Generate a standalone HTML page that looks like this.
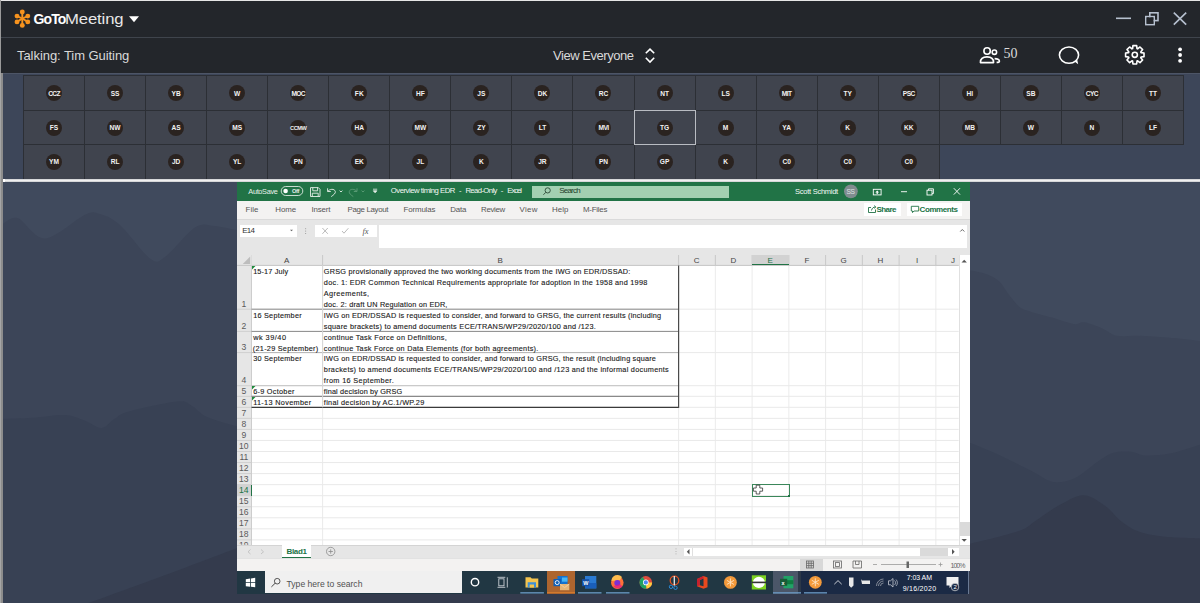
<!DOCTYPE html>
<html><head><meta charset="utf-8"><style>
*{margin:0;padding:0;box-sizing:border-box}
html,body{width:1200px;height:603px;overflow:hidden}
body{position:relative;background:#3d4658;font-family:"Liberation Sans",sans-serif}
.a{position:absolute}
#lb{left:0;top:73px;width:3px;height:530px;background:linear-gradient(90deg,#a6a6a6 0,#a6a6a6 50%,#8c8c8c 50%)}
#tb{left:1px;top:0;width:1199px;height:73px;background:#23262b;border-top:1px solid #e6e6e6}
#tbl{left:1px;top:37px;width:1199px;height:1px;background:#3f444c}
#gridbg{left:3px;top:73px;width:1197px;height:106px;background:#3d4659;border-top:1px solid #4d5566}
.pc{position:absolute;background:#40444e;border:1px solid #2c2f35;display:flex;align-items:center;justify-content:center}
.pc.sel{border:1px solid #b9bcc2;z-index:2}
.av{width:16px;height:16px;border-radius:50%;background:#2a2320;display:flex;align-items:center;justify-content:center}
.av span{color:#f2f2f2;font-size:6.6px;font-weight:bold;line-height:1;position:relative;top:0.8px}
#wl{left:5px;top:179px;width:1195px;height:3px;background:linear-gradient(#bfc0c4,#f0f0f0 35%,#f0f0f0 65%,#bfc0c4)}
#bg{left:3px;top:182px;width:1197px;height:421px}
.wt{color:#fff}
.tx{position:absolute;white-space:pre;line-height:1}
#xl{left:237px;top:181px;width:733px;height:390px;background:#ffffff;overflow:hidden}

</style></head><body>
<div class="a" id="tb"></div>
<div class="a" id="tbl"></div>
<div class="a" id="gridbg"></div>
<svg class="a" id="bg" width="1197" height="421" viewBox="3 182 1197 421">
<rect x="3" y="182" width="1197" height="421" fill="#404a5d"/>
<path d="M3.0 223.8 C5.5 222.9 11.0 215.9 18.0 218.3 C25.0 220.7 33.8 239.0 45.0 238.4 C56.2 237.8 75.8 218.8 85.0 214.7 C94.2 210.6 94.2 212.3 100.0 214.0 C105.8 215.7 111.7 217.6 120.0 225.0 C128.3 232.4 142.5 253.2 150.0 258.5 C157.5 263.8 157.5 262.2 165.0 257.0 C172.5 251.8 186.7 232.6 195.0 227.4 C203.3 222.2 206.7 225.2 215.0 226.0 C223.3 226.8 240.0 231.0 245.0 232.0 L960.0 270.0 C961.7 270.1 965.9 269.9 970.4 270.6 C974.9 271.3 981.9 272.4 986.7 274.2 C991.5 276.0 995.7 278.1 999.3 281.4 C1002.9 284.7 1005.1 289.8 1008.4 294.0 C1011.7 298.2 1015.6 303.8 1019.2 306.7 C1022.8 309.6 1024.6 309.6 1030.0 311.4 C1035.4 313.2 1044.5 315.5 1051.8 317.6 C1059.0 319.7 1068.1 323.2 1073.5 324.0 C1078.9 324.8 1079.5 321.6 1084.3 322.3 C1089.1 323.0 1097.0 326.2 1102.4 328.4 C1107.8 330.6 1110.8 334.5 1116.8 335.7 C1122.8 336.9 1130.0 335.4 1138.5 335.7 C1147.0 336.0 1157.2 336.6 1167.5 337.5 C1177.8 338.4 1194.6 340.4 1200.0 341.0 L1200 603 L3 603 Z" fill="#3c4558"/>
<path d="M3.0 418.8 C8.0 418.6 22.7 418.3 33.0 417.7 C43.3 417.1 56.0 414.5 64.7 415.0 C73.4 415.5 78.8 418.5 85.0 420.7 C91.2 422.9 96.8 428.3 101.7 428.0 C106.6 427.7 110.0 421.6 114.6 418.8 C119.1 416.0 118.5 414.3 129.0 411.4 C139.5 408.5 166.9 402.3 177.4 401.4 C187.9 400.5 187.1 403.3 192.0 405.9 C196.9 408.5 199.6 413.6 207.0 417.0 C214.4 420.4 230.3 424.4 236.6 426.2 C242.9 428.0 243.6 427.7 245.0 428.0 L960.0 440.0 C961.7 440.5 963.6 440.4 970.3 443.0 C977.0 445.6 989.7 450.7 1000.0 455.4 C1010.3 460.1 1023.2 466.9 1032.0 471.3 C1040.8 475.7 1045.9 480.7 1053.0 481.9 C1060.1 483.1 1066.8 481.8 1074.5 478.3 C1082.2 474.8 1092.6 464.9 1099.0 460.7 C1105.4 456.5 1107.7 454.4 1113.0 452.9 C1118.3 451.4 1125.7 451.4 1131.0 451.8 C1136.3 452.2 1138.5 455.1 1145.0 455.4 C1151.5 455.7 1160.8 455.4 1170.0 453.6 C1179.2 451.8 1195.0 446.3 1200.0 444.8 L1200 603 L3 603 Z" fill="#384154"/>
<path d="M88.7 603.0 C100.6 598.7 135.3 586.1 160.0 577.0 C184.7 567.9 222.4 553.5 236.6 548.2 C250.8 542.9 243.6 545.5 245.0 545.0 L960.0 545.0 C961.7 544.8 960.6 546.0 970.3 543.7 C980.0 541.4 1007.1 535.1 1018.0 531.3 C1028.9 527.5 1029.2 524.8 1035.7 520.7 C1042.2 516.6 1049.0 510.8 1057.0 506.6 C1065.0 502.4 1075.2 495.3 1083.4 495.3 C1091.6 495.3 1099.8 502.4 1106.0 506.6 C1112.2 510.8 1115.2 516.6 1120.5 520.7 C1125.8 524.8 1130.9 528.6 1138.0 531.3 C1145.1 533.9 1152.7 535.4 1163.0 536.6 C1173.3 537.8 1193.8 538.1 1200.0 538.4 L1200 603 Z" fill="#343b4d"/>
</svg>

<svg class="a" style="left:12px;top:8px" width="22" height="22" viewBox="0 0 22 22">
<g fill="#f7931e" stroke="#f7931e" stroke-width="1.9">
<line x1="10.3" y1="10.5" x2="10.3" y2="4"/><line x1="10.3" y1="10.5" x2="10.3" y2="17.4"/>
<line x1="10.3" y1="10.5" x2="5" y2="8.1"/><line x1="10.3" y1="10.5" x2="15.8" y2="8.1"/>
<line x1="10.3" y1="10.5" x2="5" y2="13.9"/><line x1="10.3" y1="10.5" x2="15.8" y2="13.9"/>
<circle cx="10.3" cy="4" r="2.45" stroke="none"/><circle cx="10.3" cy="17.4" r="2.45" stroke="none"/>
<circle cx="5" cy="8.1" r="2.45" stroke="none"/><circle cx="15.8" cy="8.1" r="2.45" stroke="none"/>
<circle cx="5" cy="13.9" r="2.45" stroke="none"/><circle cx="15.8" cy="13.9" r="2.45" stroke="none"/>
</g></svg>
<div class="a wt" style="left:33.5px;top:11.3px;font-size:14px;line-height:16px;white-space:nowrap"><b style="letter-spacing:-0.9px">GoTo</b><span style="display:inline-block;transform:scaleX(1.19);transform-origin:0 50%;color:#e8e8e8;letter-spacing:-0.1px">Meeting</span></div>
<svg class="a" style="left:128px;top:15px" width="12" height="8" viewBox="0 0 12 8"><path d="M1 1.2 H11 L6 7.2Z" fill="#fff"/></svg>
<svg class="a" style="left:1110px;top:8px" width="82" height="22" viewBox="1110 8 82 22">
<g stroke="#b6c0cf" stroke-width="1.6" fill="none">
<line x1="1116" y1="18.3" x2="1131" y2="18.3"/>
<rect x="1149.8" y="12.8" width="8.2" height="7.8"/>
<rect x="1145.8" y="16.6" width="8.4" height="8"/>
<line x1="1173.8" y1="12.6" x2="1186.2" y2="24.6"/><line x1="1186.2" y1="12.6" x2="1173.8" y2="24.6"/>
</g>
<rect x="1146.6" y="17.4" width="6.8" height="6.4" fill="#23262b"/>
<rect x="1146.6" y="17.4" width="6.8" height="6.4" fill="none" stroke="#b6c0cf" stroke-width="1.6" transform="translate(-0.8 -0.8)" opacity="0"/>
</svg>
<div class="a" style="left:17px;top:48.3px;font-size:13px;line-height:16px;color:#d9d9d9;white-space:nowrap;letter-spacing:-0.06px">Talking: Tim Guiting</div>
<div class="a" style="left:553px;top:48px;font-size:13px;line-height:16px;color:#d9d9d9;white-space:nowrap;letter-spacing:-0.45px">View Everyone</div>
<svg class="a" style="left:643px;top:46px" width="14" height="18" viewBox="0 0 14 18"><path d="M2.8 7.3 L7 3.1 L11.2 7.3 M2.8 11.8 L7 16 L11.2 11.8" stroke="#fff" stroke-width="1.6" fill="none"/></svg>

<svg class="a" style="left:970px;top:40px;width:230px;height:32px" viewBox="970 40 230 32">
<g stroke="#fff" stroke-width="1.6" fill="none" stroke-linejoin="round">
<circle cx="987.1" cy="51" r="3.2"/>
<circle cx="994.4" cy="52.2" r="2.2"/>
<path d="M980.4 62.6 C980.4 58.5 983.5 56.9 987 56.9 C990.5 56.9 993.6 58.5 993.6 62.6 Z"/>
<path d="M994.6 58.6 C997.5 58.8 999.4 60 999.4 61.2 C999.4 62 998.2 62.4 996.6 62.4"/>
<ellipse cx="1069" cy="55.1" rx="9.6" ry="8.1"/>
<path d="M1135 55 m0 0" />
<path d="M1141.02 52.60 L1144.01 52.93 L1144.01 56.67 L1141.02 57.00 L1140.76 57.64 L1142.63 59.99 L1139.99 62.63 L1137.64 60.76 L1137.00 61.02 L1136.67 64.01 L1132.93 64.01 L1132.60 61.02 L1131.96 60.76 L1129.61 62.63 L1126.97 59.99 L1128.84 57.64 L1128.58 57.00 L1125.59 56.67 L1125.59 52.93 L1128.58 52.60 L1128.84 51.96 L1126.97 49.61 L1129.61 46.97 L1131.96 48.84 L1132.60 48.58 L1132.93 45.59 L1136.67 45.59 L1137.00 48.58 L1137.64 48.84 L1139.99 46.97 L1142.63 49.61 L1140.76 51.96Z"/>
<circle cx="1134.8" cy="54.8" r="2.6"/>
</g>
<path d="M1074.5 61.5 L1078.2 64.2 L1077.2 59.8Z" fill="#fff"/>
<circle cx="1180.1" cy="49.3" r="1.9" fill="#fff"/><circle cx="1180.1" cy="55" r="1.9" fill="#fff"/><circle cx="1180.1" cy="60.8" r="1.9" fill="#fff"/>
</svg>
<div class="a" style="left:1003.5px;top:45.5px;font-family:'Liberation Serif',serif;font-size:14px;line-height:16px;color:#dcdcdc">50</div>
<div class="pc" style="left:23.00px;top:75px;width:62.05px;height:36px"><div class="av"><span style="letter-spacing:-0.6px">CCZ</span></div></div>
<div class="pc" style="left:84.05px;top:75px;width:62.05px;height:36px"><div class="av"><span>SS</span></div></div>
<div class="pc" style="left:145.11px;top:75px;width:62.05px;height:36px"><div class="av"><span>YB</span></div></div>
<div class="pc" style="left:206.16px;top:75px;width:62.05px;height:36px"><div class="av"><span>W</span></div></div>
<div class="pc" style="left:267.21px;top:75px;width:62.05px;height:36px"><div class="av"><span style="letter-spacing:-0.6px">MOC</span></div></div>
<div class="pc" style="left:328.26px;top:75px;width:62.05px;height:36px"><div class="av"><span>FK</span></div></div>
<div class="pc" style="left:389.32px;top:75px;width:62.05px;height:36px"><div class="av"><span>HF</span></div></div>
<div class="pc" style="left:450.37px;top:75px;width:62.05px;height:36px"><div class="av"><span>JS</span></div></div>
<div class="pc" style="left:511.42px;top:75px;width:62.05px;height:36px"><div class="av"><span>DK</span></div></div>
<div class="pc" style="left:572.47px;top:75px;width:62.05px;height:36px"><div class="av"><span>RC</span></div></div>
<div class="pc" style="left:633.53px;top:75px;width:62.05px;height:36px"><div class="av"><span>NT</span></div></div>
<div class="pc" style="left:694.58px;top:75px;width:62.05px;height:36px"><div class="av"><span>LS</span></div></div>
<div class="pc" style="left:755.63px;top:75px;width:62.05px;height:36px"><div class="av"><span style="letter-spacing:-0.6px">MIT</span></div></div>
<div class="pc" style="left:816.68px;top:75px;width:62.05px;height:36px"><div class="av"><span>TY</span></div></div>
<div class="pc" style="left:877.74px;top:75px;width:62.05px;height:36px"><div class="av"><span style="letter-spacing:-0.6px">PSC</span></div></div>
<div class="pc" style="left:938.79px;top:75px;width:62.05px;height:36px"><div class="av"><span>HI</span></div></div>
<div class="pc" style="left:999.84px;top:75px;width:62.05px;height:36px"><div class="av"><span>SB</span></div></div>
<div class="pc" style="left:1060.89px;top:75px;width:62.05px;height:36px"><div class="av"><span style="letter-spacing:-0.6px">CYC</span></div></div>
<div class="pc" style="left:1121.95px;top:75px;width:62.05px;height:36px"><div class="av"><span>TT</span></div></div>
<div class="pc" style="left:23.00px;top:110px;width:62.05px;height:35px"><div class="av"><span>FS</span></div></div>
<div class="pc" style="left:84.05px;top:110px;width:62.05px;height:35px"><div class="av"><span>NW</span></div></div>
<div class="pc" style="left:145.11px;top:110px;width:62.05px;height:35px"><div class="av"><span>AS</span></div></div>
<div class="pc" style="left:206.16px;top:110px;width:62.05px;height:35px"><div class="av"><span>MS</span></div></div>
<div class="pc" style="left:267.21px;top:110px;width:62.05px;height:35px"><div class="av"><span style="font-size:5.6px;letter-spacing:-0.45px">CCMW</span></div></div>
<div class="pc" style="left:328.26px;top:110px;width:62.05px;height:35px"><div class="av"><span>HA</span></div></div>
<div class="pc" style="left:389.32px;top:110px;width:62.05px;height:35px"><div class="av"><span>MW</span></div></div>
<div class="pc" style="left:450.37px;top:110px;width:62.05px;height:35px"><div class="av"><span>ZY</span></div></div>
<div class="pc" style="left:511.42px;top:110px;width:62.05px;height:35px"><div class="av"><span>LT</span></div></div>
<div class="pc" style="left:572.47px;top:110px;width:62.05px;height:35px"><div class="av"><span style="letter-spacing:-0.6px">MVI</span></div></div>
<div class="pc sel" style="left:633.53px;top:110px;width:62.05px;height:35px"><div class="av"><span>TG</span></div></div>
<div class="pc" style="left:694.58px;top:110px;width:62.05px;height:35px"><div class="av"><span>M</span></div></div>
<div class="pc" style="left:755.63px;top:110px;width:62.05px;height:35px"><div class="av"><span>YA</span></div></div>
<div class="pc" style="left:816.68px;top:110px;width:62.05px;height:35px"><div class="av"><span>K</span></div></div>
<div class="pc" style="left:877.74px;top:110px;width:62.05px;height:35px"><div class="av"><span>KK</span></div></div>
<div class="pc" style="left:938.79px;top:110px;width:62.05px;height:35px"><div class="av"><span>MB</span></div></div>
<div class="pc" style="left:999.84px;top:110px;width:62.05px;height:35px"><div class="av"><span>W</span></div></div>
<div class="pc" style="left:1060.89px;top:110px;width:62.05px;height:35px"><div class="av"><span>N</span></div></div>
<div class="pc" style="left:1121.95px;top:110px;width:62.05px;height:35px"><div class="av"><span>LF</span></div></div>
<div class="pc" style="left:23.00px;top:144px;width:62.05px;height:35.5px"><div class="av"><span>YM</span></div></div>
<div class="pc" style="left:84.05px;top:144px;width:62.05px;height:35.5px"><div class="av"><span>RL</span></div></div>
<div class="pc" style="left:145.11px;top:144px;width:62.05px;height:35.5px"><div class="av"><span>JD</span></div></div>
<div class="pc" style="left:206.16px;top:144px;width:62.05px;height:35.5px"><div class="av"><span>YL</span></div></div>
<div class="pc" style="left:267.21px;top:144px;width:62.05px;height:35.5px"><div class="av"><span>PN</span></div></div>
<div class="pc" style="left:328.26px;top:144px;width:62.05px;height:35.5px"><div class="av"><span>EK</span></div></div>
<div class="pc" style="left:389.32px;top:144px;width:62.05px;height:35.5px"><div class="av"><span>JL</span></div></div>
<div class="pc" style="left:450.37px;top:144px;width:62.05px;height:35.5px"><div class="av"><span>K</span></div></div>
<div class="pc" style="left:511.42px;top:144px;width:62.05px;height:35.5px"><div class="av"><span>JR</span></div></div>
<div class="pc" style="left:572.47px;top:144px;width:62.05px;height:35.5px"><div class="av"><span>PN</span></div></div>
<div class="pc" style="left:633.53px;top:144px;width:62.05px;height:35.5px"><div class="av"><span>GP</span></div></div>
<div class="pc" style="left:694.58px;top:144px;width:62.05px;height:35.5px"><div class="av"><span>K</span></div></div>
<div class="pc" style="left:755.63px;top:144px;width:62.05px;height:35.5px"><div class="av"><span>C0</span></div></div>
<div class="pc" style="left:816.68px;top:144px;width:62.05px;height:35.5px"><div class="av"><span>C0</span></div></div>
<div class="pc" style="left:877.74px;top:144px;width:62.05px;height:35.5px"><div class="av"><span>C0</span></div></div>
<div id="xl">
<div class="a" style="left:237px;top:181px;width:733px;height:390px;background:#fff"></div>
<div class="a" style="left:237px;top:181px;width:733px;height:20px;background:#217346"></div>
<div class="a" style="left:237px;top:201px;width:733px;height:18px;background:#f3f2f1"></div>
<div class="a" style="left:237px;top:218.5px;width:733px;height:1px;background:#dadada"></div>
<div class="a" style="left:237px;top:219.5px;width:733px;height:46px;background:#e6e6e6"></div>
<!-- search box -->
<div class="a" style="left:532.2px;top:185.5px;width:197px;height:12.5px;background:#a3d0b1"></div>
<!-- share/comments -->
<div class="a" style="left:863.5px;top:203.4px;width:37.5px;height:12.6px;background:#fff"></div>
<div class="a" style="left:906.6px;top:203.4px;width:55.7px;height:12.6px;background:#fff"></div>
<!-- name box / fx / formula -->
<div class="a" style="left:239.9px;top:224.8px;width:57.3px;height:12.5px;background:#fff"></div>
<div class="a" style="left:315.1px;top:225px;width:61.6px;height:12.2px;background:#fff"></div>
<div class="a" style="left:379.4px;top:225px;width:587.6px;height:23px;background:#fff"></div>
<!-- grid -->
<div class="a" style="left:251.5px;top:265.5px;width:707.2px;height:279.5px;background:#fff"></div>
<div class="a" style="left:237px;top:265.5px;width:14.5px;height:279.5px;background:#e6e6e6"></div>
<svg class="a" style="left:0;top:0" width="1200" height="603" viewBox="0 0 1200 603">
<line x1="322.60" y1="265.40" x2="322.60" y2="545.00" stroke="#ebebeb" stroke-width="1"/>
<line x1="678.60" y1="265.40" x2="678.60" y2="545.00" stroke="#ebebeb" stroke-width="1"/>
<line x1="715.35" y1="265.40" x2="715.35" y2="545.00" stroke="#ebebeb" stroke-width="1"/>
<line x1="752.10" y1="265.40" x2="752.10" y2="545.00" stroke="#ebebeb" stroke-width="1"/>
<line x1="788.85" y1="265.40" x2="788.85" y2="545.00" stroke="#ebebeb" stroke-width="1"/>
<line x1="825.60" y1="265.40" x2="825.60" y2="545.00" stroke="#ebebeb" stroke-width="1"/>
<line x1="862.35" y1="265.40" x2="862.35" y2="545.00" stroke="#ebebeb" stroke-width="1"/>
<line x1="899.10" y1="265.40" x2="899.10" y2="545.00" stroke="#ebebeb" stroke-width="1"/>
<line x1="935.85" y1="265.40" x2="935.85" y2="545.00" stroke="#ebebeb" stroke-width="1"/>
<line x1="251.50" y1="309.20" x2="958.70" y2="309.20" stroke="#e9e9e9" stroke-width="1"/>
<line x1="251.50" y1="331.40" x2="958.70" y2="331.40" stroke="#e9e9e9" stroke-width="1"/>
<line x1="251.50" y1="352.60" x2="958.70" y2="352.60" stroke="#e9e9e9" stroke-width="1"/>
<line x1="251.50" y1="385.70" x2="958.70" y2="385.70" stroke="#e9e9e9" stroke-width="1"/>
<line x1="251.50" y1="396.30" x2="958.70" y2="396.30" stroke="#e9e9e9" stroke-width="1"/>
<line x1="251.50" y1="407.30" x2="958.70" y2="407.30" stroke="#e9e9e9" stroke-width="1"/>
<line x1="251.50" y1="418.35" x2="958.70" y2="418.35" stroke="#e9e9e9" stroke-width="1"/>
<line x1="251.50" y1="429.40" x2="958.70" y2="429.40" stroke="#e9e9e9" stroke-width="1"/>
<line x1="251.50" y1="440.45" x2="958.70" y2="440.45" stroke="#e9e9e9" stroke-width="1"/>
<line x1="251.50" y1="451.50" x2="958.70" y2="451.50" stroke="#e9e9e9" stroke-width="1"/>
<line x1="251.50" y1="462.55" x2="958.70" y2="462.55" stroke="#e9e9e9" stroke-width="1"/>
<line x1="251.50" y1="473.60" x2="958.70" y2="473.60" stroke="#e9e9e9" stroke-width="1"/>
<line x1="251.50" y1="484.65" x2="958.70" y2="484.65" stroke="#e9e9e9" stroke-width="1"/>
<line x1="251.50" y1="495.70" x2="958.70" y2="495.70" stroke="#e9e9e9" stroke-width="1"/>
<line x1="251.50" y1="506.75" x2="958.70" y2="506.75" stroke="#e9e9e9" stroke-width="1"/>
<line x1="251.50" y1="517.80" x2="958.70" y2="517.80" stroke="#e9e9e9" stroke-width="1"/>
<line x1="251.50" y1="528.85" x2="958.70" y2="528.85" stroke="#e9e9e9" stroke-width="1"/>
<line x1="251.50" y1="539.90" x2="958.70" y2="539.90" stroke="#e9e9e9" stroke-width="1"/>
<line x1="322.60" y1="255.00" x2="322.60" y2="265.40" stroke="#c8c8c8" stroke-width="1"/>
<line x1="678.60" y1="255.00" x2="678.60" y2="265.40" stroke="#c8c8c8" stroke-width="1"/>
<line x1="715.35" y1="255.00" x2="715.35" y2="265.40" stroke="#c8c8c8" stroke-width="1"/>
<line x1="752.10" y1="255.00" x2="752.10" y2="265.40" stroke="#c8c8c8" stroke-width="1"/>
<line x1="788.85" y1="255.00" x2="788.85" y2="265.40" stroke="#c8c8c8" stroke-width="1"/>
<line x1="825.60" y1="255.00" x2="825.60" y2="265.40" stroke="#c8c8c8" stroke-width="1"/>
<line x1="862.35" y1="255.00" x2="862.35" y2="265.40" stroke="#c8c8c8" stroke-width="1"/>
<line x1="899.10" y1="255.00" x2="899.10" y2="265.40" stroke="#c8c8c8" stroke-width="1"/>
<line x1="935.85" y1="255.00" x2="935.85" y2="265.40" stroke="#c8c8c8" stroke-width="1"/>
<line x1="237.00" y1="309.20" x2="251.50" y2="309.20" stroke="#cfcfcf" stroke-width="1"/>
<line x1="237.00" y1="331.40" x2="251.50" y2="331.40" stroke="#cfcfcf" stroke-width="1"/>
<line x1="237.00" y1="352.60" x2="251.50" y2="352.60" stroke="#cfcfcf" stroke-width="1"/>
<line x1="237.00" y1="385.70" x2="251.50" y2="385.70" stroke="#cfcfcf" stroke-width="1"/>
<line x1="237.00" y1="396.30" x2="251.50" y2="396.30" stroke="#cfcfcf" stroke-width="1"/>
<line x1="237.00" y1="407.30" x2="251.50" y2="407.30" stroke="#cfcfcf" stroke-width="1"/>
<line x1="237.00" y1="418.35" x2="251.50" y2="418.35" stroke="#cfcfcf" stroke-width="1"/>
<line x1="237.00" y1="429.40" x2="251.50" y2="429.40" stroke="#cfcfcf" stroke-width="1"/>
<line x1="237.00" y1="440.45" x2="251.50" y2="440.45" stroke="#cfcfcf" stroke-width="1"/>
<line x1="237.00" y1="451.50" x2="251.50" y2="451.50" stroke="#cfcfcf" stroke-width="1"/>
<line x1="237.00" y1="462.55" x2="251.50" y2="462.55" stroke="#cfcfcf" stroke-width="1"/>
<line x1="237.00" y1="473.60" x2="251.50" y2="473.60" stroke="#cfcfcf" stroke-width="1"/>
<line x1="237.00" y1="484.65" x2="251.50" y2="484.65" stroke="#cfcfcf" stroke-width="1"/>
<line x1="237.00" y1="495.70" x2="251.50" y2="495.70" stroke="#cfcfcf" stroke-width="1"/>
<line x1="237.00" y1="506.75" x2="251.50" y2="506.75" stroke="#cfcfcf" stroke-width="1"/>
<line x1="237.00" y1="517.80" x2="251.50" y2="517.80" stroke="#cfcfcf" stroke-width="1"/>
<line x1="237.00" y1="528.85" x2="251.50" y2="528.85" stroke="#cfcfcf" stroke-width="1"/>
<line x1="237.00" y1="539.90" x2="251.50" y2="539.90" stroke="#cfcfcf" stroke-width="1"/>
<line x1="237.00" y1="265.40" x2="958.70" y2="265.40" stroke="#c6c6c6" stroke-width="1"/>
<line x1="251.50" y1="265.40" x2="251.50" y2="545.00" stroke="#cdcdcd" stroke-width="1"/>
<line x1="251.50" y1="255.00" x2="251.50" y2="265.40" stroke="#dcdcdc" stroke-width="1"/>
<line x1="251.50" y1="309.20" x2="678.60" y2="309.20" stroke="#8a8a8a" stroke-width="1"/>
<line x1="251.50" y1="331.40" x2="678.60" y2="331.40" stroke="#8a8a8a" stroke-width="1"/>
<line x1="251.50" y1="352.60" x2="678.60" y2="352.60" stroke="#b4b4b4" stroke-width="1"/>
<line x1="251.50" y1="385.70" x2="678.60" y2="385.70" stroke="#c2c2c2" stroke-width="1"/>
<line x1="251.50" y1="396.30" x2="678.60" y2="396.30" stroke="#707070" stroke-width="1"/>
<line x1="251.50" y1="407.30" x2="678.60" y2="407.30" stroke="#3a3a3a" stroke-width="1.3"/>
<line x1="678.60" y1="265.40" x2="678.60" y2="407.90" stroke="#4a4a4a" stroke-width="1.2"/>
<line x1="322.60" y1="265.40" x2="322.60" y2="407.30" stroke="#d6d6d6" stroke-width="1"/>
</svg>

<!-- header highlights -->
<div class="a" style="left:752.1px;top:255px;width:36.75px;height:10.4px;background:#d2d2d2;border-bottom:1px solid #217346"></div>
<div class="a" style="left:237px;top:484.6px;width:14.5px;height:11.05px;background:#d2d2d2;border-right:1px solid #217346"></div>
<!-- corner triangle -->
<svg class="a" style="left:242px;top:256px" width="10" height="10" viewBox="0 0 10 10"><path d="M0.8 8 L8.2 8 L8.2 0.6Z" fill="#bdbdbd"/></svg>
<!-- green error triangles -->
<svg class="a" style="left:252px;top:265.5px" width="5" height="5" viewBox="0 0 5 5"><path d="M0 0 H3.5 L0 3.5Z" fill="#1e8a3c"/></svg>
<svg class="a" style="left:252px;top:386px" width="5" height="5" viewBox="0 0 5 5"><path d="M0 0 H3.5 L0 3.5Z" fill="#1e8a3c"/></svg>
<svg class="a" style="left:252px;top:396.8px" width="5" height="5" viewBox="0 0 5 5"><path d="M0 0 H3.5 L0 3.5Z" fill="#1e8a3c"/></svg>
<!-- selection E14 -->
<div class="a" style="left:752px;top:484.3px;width:37.6px;height:12.3px;border:1px solid #3b875a"></div>
<div class="a" style="left:787.8px;top:494.8px;width:2.6px;height:2.6px;background:#217346"></div>
<svg class="a" style="left:751px;top:482px" width="14" height="14" viewBox="0 0 14 14"><path d="M5.2 3.2 H8.8 V6 H11.6 V9.2 H8.8 V12 H5.2 V9.2 H2.4 V6 H5.2Z" fill="#fff" stroke="#333" stroke-width="0.8"/></svg>
<!-- vertical scrollbar -->
<div class="a" style="left:958.7px;top:255px;width:11.3px;height:290px;background:#fff;border-left:1px solid #e0e0e0"></div>
<div class="a" style="left:959.5px;top:522.4px;width:10px;height:14px;background:#dadada"></div>
<svg class="a" style="left:958px;top:255px" width="12" height="290" viewBox="0 0 12 290"><path d="M3.5 7.5 L6.2 4.8 L8.9 7.5Z" fill="#555"/><path d="M3.5 284 L6.2 286.7 L8.9 284Z" fill="#555"/></svg>
<!-- sheet tabs bar -->
<div class="a" style="left:237px;top:545.2px;width:733px;height:12.8px;background:#e6e6e6;border-top:1px solid #d4d4d4"></div>
<div class="a" style="left:282px;top:545.2px;width:29.4px;height:12.8px;background:#fff;border-bottom:1.3px solid #217346"></div>
<svg class="a" style="left:237px;top:545px" width="120" height="13" viewBox="0 0 120 13"><path d="M13.5 4.5 L11 6.8 L13.5 9" stroke="#c0c0c0" stroke-width="0.9" fill="none"/><path d="M24 4.5 L26.5 6.8 L24 9" stroke="#c0c0c0" stroke-width="0.9" fill="none"/><circle cx="93.7" cy="6.5" r="4.2" fill="none" stroke="#8a8a8a" stroke-width="0.8"/><path d="M93.7 4.3 V8.7 M91.5 6.5 H95.9" stroke="#8a8a8a" stroke-width="0.8"/></svg>
<!-- horizontal scrollbar -->
<div class="a" style="left:683.7px;top:547.5px;width:275px;height:8.5px;background:#fff"></div>
<div class="a" style="left:920px;top:547.5px;width:28px;height:8.5px;background:#dadada"></div>
<div class="a" style="left:691.8px;top:547.5px;width:0.8px;height:8.5px;background:#e0e0e0"></div>
<svg class="a" style="left:670px;top:545px" width="300" height="13" viewBox="0 0 300 13"><path d="M19.5 4 L16.8 6.7 L19.5 9.4Z" fill="#555"/><path d="M282 4 L284.7 6.7 L282 9.4Z" fill="#555"/><path d="M6 3.5 V4.3 M6 6 V6.8 M6 8.5 V9.3" stroke="#999" stroke-width="0.8"/></svg>
<!-- status bar -->
<div class="a" style="left:237px;top:558px;width:733px;height:13px;background:#f3f2f1;border-top:1px solid #e2e2e2"></div>
<div class="a" style="left:800px;top:558.5px;width:22.5px;height:12.5px;background:#d8d8d8"></div>
<svg class="a" style="left:790px;top:557px" width="180" height="15" viewBox="0 0 180 15">
<g stroke="#666" stroke-width="0.8" fill="none">
<rect x="16.5" y="4" width="7" height="7"/><path d="M16.5 6.3 H23.5 M16.5 8.6 H23.5 M18.8 4 V11 M21.2 4 V11"/>
<rect x="43.5" y="4" width="8" height="7"/><rect x="45.5" y="5.6" width="4" height="3.8"/>
<path d="M63 11 V4 H71.5 V11 Z M65.5 4 V7.5 H69 V4"/>
<path d="M83 7.5 H87 M91 7.5 H146 M148.5 7.5 H152.5 M150.5 5.5 V9.5" stroke="#999"/>
</g>
<rect x="116.5" y="4.5" width="2.5" height="6.5" fill="#666"/>
</svg>
</div>
</div>

<!-- taskbar -->
<div class="a" style="left:237px;top:571px;width:564px;height:22.5px;background:#213743"></div>
<div class="a" style="left:801px;top:571px;width:167px;height:22.5px;background:#1b2a45"></div>
<div class="a" style="left:967.5px;top:571px;width:1.2px;height:22.5px;background:#6a7a94"></div>
<div class="a" style="left:264.5px;top:571px;width:197px;height:22.4px;background:#f0f0f0"></div>
<div class="a" style="left:547px;top:571px;width:28px;height:22.5px;background:#ad652f"></div>
<div class="a" style="left:547px;top:592.2px;width:28px;height:1.3px;background:#d27a2e"></div>
<div class="a" style="left:773px;top:571px;width:25px;height:22.5px;background:#4b5668"></div>
<div class="a" style="left:798px;top:571px;width:3px;height:22.5px;background:#2b3748"></div>
<svg class="a" style="left:237px;top:571px" width="733" height="23" viewBox="237 571 733 23">
<!-- underlines -->
<g fill="#6d9bc6">
<rect x="520.3" y="592.2" width="23.6" height="1.3"/>
<rect x="578" y="592.2" width="23.5" height="1.3"/>
<rect x="606" y="592.2" width="23.5" height="1.3"/>
<rect x="773" y="592.2" width="28" height="1.3"/>
<rect x="804" y="592.2" width="23" height="1.3"/>
</g>
<!-- windows logo -->
<path d="M245.8 579.2 L250.2 578.6 L250.2 582.3 L245.8 582.3Z M251 578.5 L255.2 577.8 L255.2 582.3 L251 582.3Z M245.8 583.1 L250.2 583.1 L250.2 586.7 L245.8 586.2Z M251 583.1 L255.2 583.1 L255.2 587.3 L251 586.8Z" fill="#fff"/>
<!-- search icon -->
<circle cx="277.2" cy="581.2" r="2.8" fill="none" stroke="#444" stroke-width="0.9"/>
<path d="M275.2 583.2 L271.4 586.9" stroke="#444" stroke-width="1"/>
<!-- cortana -->
<circle cx="475" cy="582.2" r="3.7" fill="none" stroke="#fff" stroke-width="1.4"/>
<!-- task view -->
<g stroke="#c9cfd4" stroke-width="0.9" fill="none"><rect x="498.8" y="578.8" width="5.2" height="7"/><path d="M497.5 577.3 H505.3 M497.5 587.3 H505.3 M507.3 577.3 V587.5"/></g>
<!-- explorer -->
<path d="M525.5 577.2 H530.5 L531.8 578.5 H538.3 V587.6 H525.5Z" fill="#f4c44e"/>
<path d="M527.7 582.3 H536 V587.6 H534 V584.6 H529.8 V587.6 H527.7Z" fill="#3d8fd6"/>
<rect x="529.8" y="585" width="4.2" height="2.6" fill="#f4c44e"/>
<!-- outlook -->
<rect x="557.5" y="576" width="10" height="9" fill="#1573d0"/>
<rect x="562" y="577.5" width="5.5" height="4.2" fill="#48b6f5"/>
<rect x="553.5" y="579" width="7.5" height="7.2" fill="#0f5fb8"/>
<circle cx="557.2" cy="582.6" r="2" fill="none" stroke="#fff" stroke-width="0.9"/>
<rect x="560" y="584" width="9.3" height="6.2" fill="#e9b676"/>
<path d="M560 584 L564.6 587.6 L569.3 584" stroke="#f6d8ad" stroke-width="0.7" fill="none"/>
<!-- word -->
<rect x="585" y="576" width="11.3" height="12.4" fill="#2a7ad2"/>
<rect x="585" y="583" width="11.3" height="5.4" fill="#1a5fba"/>
<rect x="582" y="579.2" width="7.2" height="7" fill="#1450a8"/>
<text x="583.2" y="585" font-family="Liberation Sans" font-size="5.5" font-weight="bold" fill="#fff">W</text>
<!-- firefox -->
<circle cx="617.3" cy="582.6" r="6.3" fill="#ff7139"/>
<path d="M611.5 581 A6 6 0 0 1 622 577 L620 580Z" fill="#ffbd4f"/>
<circle cx="617.3" cy="583" r="3" fill="#7b2fd6"/>
<path d="M613 586 A6 6 0 0 0 622.5 586.5 L620 584Z" fill="#e31587" opacity="0.7"/>
<!-- chrome -->
<circle cx="645.8" cy="582.4" r="6.3" fill="#dd4b3e"/>
<path d="M645.8 582.4 L640.3 585.5 A6.3 6.3 0 0 0 646.5 588.7Z" fill="#1ea362"/>
<path d="M639.5 582.4 A6.3 6.3 0 0 0 640.3 585.5 L645.8 582.4 L642.9 577.1 A6.3 6.3 0 0 0 639.5 582.4Z" fill="#1ea362"/>
<path d="M645.8 582.4 L652.1 582.4 A6.3 6.3 0 0 1 646.5 588.7Z" fill="#ffcd40"/>
<circle cx="645.8" cy="582.4" r="2.8" fill="#fff"/>
<circle cx="645.8" cy="582.4" r="2.1" fill="#4a8af4"/>
<!-- snipping -->
<circle cx="674.5" cy="580.5" r="4.3" fill="none" stroke="#e0501f" stroke-width="1.3"/>
<path d="M674.3 576 V585.5" stroke="#e8e8e8" stroke-width="1.3"/>
<circle cx="671" cy="586.8" r="1.7" fill="none" stroke="#2a8ad6" stroke-width="1"/>
<circle cx="675.5" cy="587.8" r="1.7" fill="none" stroke="#2a8ad6" stroke-width="1"/>
<!-- office -->
<path d="M697 579 L703.5 576 L707.5 577.5 V587.3 L703.5 588.8 L697 586.3Z" fill="#e8491e"/>
<path d="M699.7 580 L703.5 578.6 V586.2 L699.7 585.2Z" fill="#213743"/>
<path d="M697 579 L703.5 576 V578.6 L699.7 580 V585.2 L697 586.3Z" fill="#c8202f"/>
<!-- goto -->
<circle cx="730.4" cy="582.4" r="6.4" fill="#f39a3b"/>
<g stroke="#fde3c3" stroke-width="0.9"><path d="M730.4 578.4 V586.4 M726.9 580.4 L733.9 584.4 M733.9 580.4 L726.9 584.4"/></g>
<!-- green app -->
<rect x="751.8" y="575.3" width="14.2" height="14.2" fill="#7dd321"/>
<ellipse cx="758.9" cy="582.4" rx="6" ry="5.6" fill="#fff"/>
<rect x="751.8" y="581.6" width="14.2" height="1.6" fill="#333"/>
<!-- excel -->
<rect x="783.5" y="576" width="9.8" height="12.3" fill="#21a366"/>
<rect x="783.5" y="580.2" width="9.8" height="4" fill="#107c41"/>
<rect x="780" y="578.8" width="7.2" height="7" fill="#185c37"/>
<text x="781.6" y="584.6" font-family="Liberation Sans" font-size="5.5" font-weight="bold" fill="#fff">x</text>
<!-- goto 2 -->
<circle cx="815.3" cy="582.3" r="6.4" fill="#f39a3b"/>
<g stroke="#fde3c3" stroke-width="0.9"><path d="M815.3 578.3 V586.3 M811.8 580.3 L818.8 584.3 M818.8 580.3 L811.8 584.3"/></g>
<!-- tray -->
<path d="M834.3 584.2 L838 580.6 L841.7 584.2" stroke="#c8ccd4" stroke-width="1" fill="none"/>
<path d="M849 577.5 H853.5 V585.5 L851.2 587.7 L849 585.5Z" fill="#e8e8e8"/>
<path d="M861 579 L862 580.5 H870 V584 H862Z" fill="#e8e8e8"/>
<path d="M876.5 586 A7 7 0 0 1 883.5 579 M878.5 586 A5 5 0 0 1 883.5 581 M880.5 586 A3 3 0 0 1 883.5 583" stroke="#9aa0aa" stroke-width="0.8" fill="none"/>
<path d="M888.5 580.8 H890.5 L893 578.5 V587 L890.5 584.8 H888.5Z" fill="none" stroke="#c8ccd4" stroke-width="0.8"/>
<path d="M894.5 580.5 A3 3 0 0 1 894.5 585 M896 579.5 A4.5 4.5 0 0 1 896 586" stroke="#c8ccd4" stroke-width="0.7" fill="none"/>
<!-- notification -->
<path d="M946.5 577 H958.5 V585.5 H952 L949.5 588 V585.5 H946.5Z" fill="#f0f0f0"/>
<circle cx="955" cy="587" r="3.8" fill="#1b2a45" stroke="#e0e0e0" stroke-width="0.7"/>
<text x="953.4" y="589.2" font-family="Liberation Sans" font-size="6" fill="#fff">2</text>
</svg>

<!-- excel title icons -->
<svg class="a" style="left:237px;top:181px" width="733" height="39" viewBox="237 181 733 39">
<rect x="281.2" y="186.5" width="21.6" height="9" rx="4.5" fill="none" stroke="#e6efe9" stroke-width="0.85"/>
<circle cx="285.6" cy="191" r="2.3" fill="#fff"/>
<text x="292" y="193.1" font-family="Liberation Sans" font-size="5.6" font-weight="bold" fill="#e6efe9" letter-spacing="-0.4">Off</text>
<g stroke="#e6efe9" stroke-width="0.9" fill="none">
<path d="M310.5 187.6 H318.3 L320 189.3 V196.5 H310.5Z"/>
<path d="M312.8 187.6 V190.8 H317.6 V187.6 M312.3 196.5 V193.2 H318.2 V196.5"/>
<path d="M327.6 188.3 V191.5 H330.8" />
<path d="M327.8 191.3 C329.5 189 334.5 188.3 335.3 191.5 C335.8 193.3 333.5 195 331.2 196.6"/>
<path d="M339.6 190.6 L341 192 L342.4 190.6"/>
</g>
<g stroke="#5e9d78" stroke-width="0.9" fill="none">
<path d="M357 188.3 V191.5 H353.8"/>
<path d="M356.8 191.3 C355 189 350 188.3 349.3 191.5 C348.8 193.3 351 195 353.3 196.6"/>
<path d="M361.6 190.6 L363 192 L364.4 190.6"/>
</g>
<path d="M373 189.2 H377.2 M373.3 190.8 L375.1 192.8 L376.9 190.8Z" stroke="#e6efe9" stroke-width="0.8" fill="#e6efe9"/>
<circle cx="547.7" cy="190.4" r="2.6" fill="none" stroke="#2b4a35" stroke-width="0.9"/>
<path d="M545.8 192.3 L543.4 194.8" stroke="#2b4a35" stroke-width="0.9"/>
<circle cx="850.9" cy="191.3" r="6.9" fill="#808c8f"/>
<text x="846.4" y="193.8" font-family="Liberation Sans" font-size="6.6" fill="#dfe4e4" letter-spacing="-0.2">SS</text>
<g stroke="#fff" stroke-width="0.9" fill="none">
<rect x="873.3" y="189.3" width="7.8" height="5.6"/>
<path d="M901 191.7 H907"/>
<rect x="927" y="190.2" width="5" height="4.8"/>
<path d="M928.5 190.2 V188.8 H933.4 V193.6 H932"/>
<path d="M953.8 188.2 L960 194.6 M960 188.2 L953.8 194.6"/>
</g>
<path d="M877.2 190.6 L875.3 192.5 H876.6 V194 H877.8 V192.5 H879.1Z" fill="#fff"/>
<g stroke="#217346" stroke-width="0.9" fill="none">
<path d="M868.5 207.5 H871 M868.5 207.5 V212.5 H875.5 V209.5 M871.5 210.5 C872 208 873.5 207 875.5 207 M874.2 205.6 L875.8 207 L874.2 208.4"/>
<path d="M911.3 206.3 H918.7 V211 H914 L912.5 212.6 V211 H911.3Z"/>
</g>
</svg>
<!-- formula bar icons -->
<svg class="a" style="left:237px;top:220px" width="733" height="35" viewBox="237 220 733 35">
<path d="M290 229.8 L291.5 231.3 L293 229.8Z" fill="#666"/>
<g fill="#9a9a9a"><rect x="305.2" y="228.2" width="0.9" height="1"/><rect x="305.2" y="230.6" width="0.9" height="1"/><rect x="305.2" y="233" width="0.9" height="1"/></g>
<path d="M322.4 228 L327.8 233.8 M327.8 228 L322.4 233.8" stroke="#a8a8a8" stroke-width="0.8"/>
<path d="M342 231 L344 233.2 L348.4 228.2" stroke="#a8a8a8" stroke-width="0.8" fill="none"/>
<text x="362.5" y="234" font-family="Liberation Serif" font-style="italic" font-size="8.5" fill="#555">fx</text>
<path d="M960.3 231.5 L962.3 229.5 L964.3 231.5" stroke="#555" stroke-width="0.9" fill="none"/>
</svg>
<div class="tx" style="left:248.33px;top:187.62px;font-size:7.3px;font-family:'Liberation Sans';color:#e8f0ea;font-weight:400;letter-spacing:-0.304px;">AutoSave</div>
<div class="tx" style="left:390.81px;top:187.38px;font-size:7.7px;font-family:'Liberation Sans';color:#f4f8f5;font-weight:400;letter-spacing:-0.471px;">Overview timing EDR</div>
<div class="tx" style="left:458.92px;top:187.38px;font-size:7.7px;font-family:'Liberation Sans';color:#f4f8f5;font-weight:400;letter-spacing:0.000px;">-</div>
<div class="tx" style="left:465.42px;top:187.38px;font-size:7.7px;font-family:'Liberation Sans';color:#f4f8f5;font-weight:400;letter-spacing:-0.597px;">Read-Only</div>
<div class="tx" style="left:500.81px;top:187.38px;font-size:7.7px;font-family:'Liberation Sans';color:#f4f8f5;font-weight:400;letter-spacing:0.000px;">-</div>
<div class="tx" style="left:507.31px;top:187.38px;font-size:7.7px;font-family:'Liberation Sans';color:#f4f8f5;font-weight:400;letter-spacing:-1.011px;">Excel</div>
<div class="tx" style="left:559.20px;top:187.23px;font-size:8px;font-family:'Liberation Sans';color:#1f3d2a;font-weight:400;letter-spacing:-0.772px;">Search</div>
<div class="tx" style="left:795.12px;top:187.85px;font-size:7.5px;font-family:'Liberation Sans';color:#f4f8f5;font-weight:400;letter-spacing:-0.269px;">Scott Schmidt</div>
<div class="tx" style="left:245.60px;top:206.41px;font-size:7.9px;font-family:'Liberation Sans';color:#555555;font-weight:400;letter-spacing:0.024px;">File</div>
<div class="tx" style="left:275.31px;top:206.41px;font-size:7.9px;font-family:'Liberation Sans';color:#555555;font-weight:400;letter-spacing:-0.091px;">Home</div>
<div class="tx" style="left:311.61px;top:206.41px;font-size:7.9px;font-family:'Liberation Sans';color:#555555;font-weight:400;letter-spacing:-0.189px;">Insert</div>
<div class="tx" style="left:347.61px;top:206.41px;font-size:7.9px;font-family:'Liberation Sans';color:#555555;font-weight:400;letter-spacing:-0.352px;">Page Layout</div>
<div class="tx" style="left:403.61px;top:206.41px;font-size:7.9px;font-family:'Liberation Sans';color:#555555;font-weight:400;letter-spacing:-0.157px;">Formulas</div>
<div class="tx" style="left:450.31px;top:206.41px;font-size:7.9px;font-family:'Liberation Sans';color:#555555;font-weight:400;letter-spacing:-0.194px;">Data</div>
<div class="tx" style="left:481.11px;top:206.41px;font-size:7.9px;font-family:'Liberation Sans';color:#555555;font-weight:400;letter-spacing:-0.377px;">Review</div>
<div class="tx" style="left:519.61px;top:206.41px;font-size:7.9px;font-family:'Liberation Sans';color:#555555;font-weight:400;letter-spacing:0.274px;">View</div>
<div class="tx" style="left:552.11px;top:206.41px;font-size:7.9px;font-family:'Liberation Sans';color:#555555;font-weight:400;letter-spacing:0.019px;">Help</div>
<div class="tx" style="left:583.00px;top:206.41px;font-size:7.9px;font-family:'Liberation Sans';color:#555555;font-weight:400;letter-spacing:-0.247px;">M-Files</div>
<div class="tx" style="left:876.40px;top:205.98px;font-size:8px;font-family:'Liberation Sans';color:#217346;font-weight:700;letter-spacing:-0.559px;">Share</div>
<div class="tx" style="left:919.60px;top:205.98px;font-size:8px;font-family:'Liberation Sans';color:#217346;font-weight:700;letter-spacing:-0.435px;">Comments</div>
<div class="tx" style="left:242.30px;top:227.43px;font-size:8px;font-family:'Liberation Sans';color:#333333;font-weight:400;letter-spacing:-0.817px;">E14</div>
<div class="tx" style="left:323.83px;top:267.67px;font-size:7.3px;font-family:'Liberation Sans';color:#202020;font-weight:400;letter-spacing:0.225px;-webkit-text-stroke:0.12px #202020">GRSG provisionally approved the two working documents from the IWG on EDR/DSSAD:</div>
<div class="tx" style="left:323.83px;top:278.77px;font-size:7.3px;font-family:'Liberation Sans';color:#202020;font-weight:400;letter-spacing:0.263px;-webkit-text-stroke:0.12px #202020">doc. 1: EDR Common Technical Requirements appropriate for adoption in the 1958 and 1998</div>
<div class="tx" style="left:323.83px;top:289.87px;font-size:7.3px;font-family:'Liberation Sans';color:#202020;font-weight:400;letter-spacing:0.385px;-webkit-text-stroke:0.12px #202020">Agreements,</div>
<div class="tx" style="left:323.83px;top:300.97px;font-size:7.3px;font-family:'Liberation Sans';color:#202020;font-weight:400;letter-spacing:0.174px;-webkit-text-stroke:0.12px #202020">doc. 2: draft UN Regulation on EDR,</div>
<div class="tx" style="left:323.83px;top:311.57px;font-size:7.3px;font-family:'Liberation Sans';color:#202020;font-weight:400;letter-spacing:0.203px;-webkit-text-stroke:0.12px #202020">IWG on EDR/DSSAD is requested to consider, and forward to GRSG, the current results (including</div>
<div class="tx" style="left:323.83px;top:322.67px;font-size:7.3px;font-family:'Liberation Sans';color:#202020;font-weight:400;letter-spacing:0.247px;-webkit-text-stroke:0.12px #202020">square brackets) to amend documents ECE/TRANS/WP29/2020/100 and /123.</div>
<div class="tx" style="left:323.83px;top:333.67px;font-size:7.3px;font-family:'Liberation Sans';color:#202020;font-weight:400;letter-spacing:0.279px;-webkit-text-stroke:0.12px #202020">continue Task Force on Definitions,</div>
<div class="tx" style="left:323.83px;top:344.77px;font-size:7.3px;font-family:'Liberation Sans';color:#202020;font-weight:400;letter-spacing:0.260px;-webkit-text-stroke:0.12px #202020">continue Task Force on Data Elements (for both agreements).</div>
<div class="tx" style="left:323.83px;top:354.87px;font-size:7.3px;font-family:'Liberation Sans';color:#202020;font-weight:400;letter-spacing:0.195px;-webkit-text-stroke:0.12px #202020">IWG on EDR/DSSAD is requested to consider, and forward to GRSG, the result (including square</div>
<div class="tx" style="left:323.83px;top:365.97px;font-size:7.3px;font-family:'Liberation Sans';color:#202020;font-weight:400;letter-spacing:0.277px;-webkit-text-stroke:0.12px #202020">brackets) to amend documents ECE/TRANS/WP29/2020/100 and /123 and the informal documents</div>
<div class="tx" style="left:323.83px;top:377.07px;font-size:7.3px;font-family:'Liberation Sans';color:#202020;font-weight:400;letter-spacing:0.343px;-webkit-text-stroke:0.12px #202020">from 16 September.</div>
<div class="tx" style="left:323.83px;top:387.97px;font-size:7.3px;font-family:'Liberation Sans';color:#202020;font-weight:400;letter-spacing:0.133px;-webkit-text-stroke:0.12px #202020">final decision by GRSG</div>
<div class="tx" style="left:323.83px;top:398.57px;font-size:7.3px;font-family:'Liberation Sans';color:#202020;font-weight:400;letter-spacing:0.284px;-webkit-text-stroke:0.12px #202020">final decision by AC.1/WP.29</div>
<div class="tx" style="left:253.13px;top:267.67px;font-size:7.3px;font-family:'Liberation Sans';color:#202020;font-weight:400;letter-spacing:0.140px;-webkit-text-stroke:0.12px #202020">15-17 July</div>
<div class="tx" style="left:253.13px;top:311.57px;font-size:7.3px;font-family:'Liberation Sans';color:#202020;font-weight:400;letter-spacing:0.244px;-webkit-text-stroke:0.12px #202020">16 September</div>
<div class="tx" style="left:253.13px;top:333.67px;font-size:7.3px;font-family:'Liberation Sans';color:#202020;font-weight:400;letter-spacing:0.516px;-webkit-text-stroke:0.12px #202020">wk 39/40</div>
<div class="tx" style="left:252.83px;top:344.77px;font-size:7.3px;font-family:'Liberation Sans';color:#202020;font-weight:400;letter-spacing:0.255px;-webkit-text-stroke:0.12px #202020">(21-29 September)</div>
<div class="tx" style="left:253.13px;top:354.87px;font-size:7.3px;font-family:'Liberation Sans';color:#202020;font-weight:400;letter-spacing:0.244px;-webkit-text-stroke:0.12px #202020">30 September</div>
<div class="tx" style="left:253.13px;top:387.97px;font-size:7.3px;font-family:'Liberation Sans';color:#202020;font-weight:400;letter-spacing:0.280px;-webkit-text-stroke:0.12px #202020">6-9 October</div>
<div class="tx" style="left:253.13px;top:398.57px;font-size:7.3px;font-family:'Liberation Sans';color:#202020;font-weight:400;letter-spacing:0.324px;-webkit-text-stroke:0.12px #202020">11-13 November</div>
<div class="tx" style="left:276.65px;top:257.43px;font-size:8px;font-family:'Liberation Sans';color:#444444;font-weight:400;letter-spacing:0.000px;width:20px;text-align:center">A</div>
<div class="tx" style="left:490.20px;top:257.43px;font-size:8px;font-family:'Liberation Sans';color:#444444;font-weight:400;letter-spacing:0.000px;width:20px;text-align:center">B</div>
<div class="tx" style="left:686.58px;top:257.43px;font-size:8px;font-family:'Liberation Sans';color:#444444;font-weight:400;letter-spacing:0.000px;width:20px;text-align:center">C</div>
<div class="tx" style="left:723.33px;top:257.43px;font-size:8px;font-family:'Liberation Sans';color:#444444;font-weight:400;letter-spacing:0.000px;width:20px;text-align:center">D</div>
<div class="tx" style="left:760.08px;top:257.43px;font-size:8px;font-family:'Liberation Sans';color:#217346;font-weight:400;letter-spacing:0.000px;width:20px;text-align:center">E</div>
<div class="tx" style="left:796.83px;top:257.43px;font-size:8px;font-family:'Liberation Sans';color:#444444;font-weight:400;letter-spacing:0.000px;width:20px;text-align:center">F</div>
<div class="tx" style="left:833.58px;top:257.43px;font-size:8px;font-family:'Liberation Sans';color:#444444;font-weight:400;letter-spacing:0.000px;width:20px;text-align:center">G</div>
<div class="tx" style="left:870.33px;top:257.43px;font-size:8px;font-family:'Liberation Sans';color:#444444;font-weight:400;letter-spacing:0.000px;width:20px;text-align:center">H</div>
<div class="tx" style="left:907.08px;top:257.43px;font-size:8px;font-family:'Liberation Sans';color:#444444;font-weight:400;letter-spacing:0.000px;width:20px;text-align:center">I</div>
<div class="tx" style="left:951.10px;top:257.43px;font-size:8px;font-family:'Liberation Sans';color:#444444;font-weight:400;letter-spacing:0.000px;">J</div>
<div class="tx" style="left:233.87px;top:299.62px;font-size:8.6px;font-family:'Liberation Sans';color:#5a5a5a;font-weight:400;letter-spacing:0.000px;width:20px;text-align:center">1</div>
<div class="tx" style="left:233.87px;top:321.82px;font-size:8.6px;font-family:'Liberation Sans';color:#5a5a5a;font-weight:400;letter-spacing:0.000px;width:20px;text-align:center">2</div>
<div class="tx" style="left:233.87px;top:343.02px;font-size:8.6px;font-family:'Liberation Sans';color:#5a5a5a;font-weight:400;letter-spacing:0.000px;width:20px;text-align:center">3</div>
<div class="tx" style="left:233.87px;top:376.12px;font-size:8.6px;font-family:'Liberation Sans';color:#5a5a5a;font-weight:400;letter-spacing:0.000px;width:20px;text-align:center">4</div>
<div class="tx" style="left:233.87px;top:386.72px;font-size:8.6px;font-family:'Liberation Sans';color:#5a5a5a;font-weight:400;letter-spacing:0.000px;width:20px;text-align:center">5</div>
<div class="tx" style="left:233.87px;top:397.72px;font-size:8.6px;font-family:'Liberation Sans';color:#5a5a5a;font-weight:400;letter-spacing:0.000px;width:20px;text-align:center">6</div>
<div class="tx" style="left:233.87px;top:408.77px;font-size:8.6px;font-family:'Liberation Sans';color:#5a5a5a;font-weight:400;letter-spacing:0.000px;width:20px;text-align:center">7</div>
<div class="tx" style="left:233.87px;top:419.82px;font-size:8.6px;font-family:'Liberation Sans';color:#5a5a5a;font-weight:400;letter-spacing:0.000px;width:20px;text-align:center">8</div>
<div class="tx" style="left:233.87px;top:430.87px;font-size:8.6px;font-family:'Liberation Sans';color:#5a5a5a;font-weight:400;letter-spacing:0.000px;width:20px;text-align:center">9</div>
<div class="tx" style="left:233.87px;top:441.92px;font-size:8.6px;font-family:'Liberation Sans';color:#5a5a5a;font-weight:400;letter-spacing:0.000px;width:20px;text-align:center">10</div>
<div class="tx" style="left:233.87px;top:452.97px;font-size:8.6px;font-family:'Liberation Sans';color:#5a5a5a;font-weight:400;letter-spacing:0.000px;width:20px;text-align:center">11</div>
<div class="tx" style="left:233.87px;top:464.02px;font-size:8.6px;font-family:'Liberation Sans';color:#5a5a5a;font-weight:400;letter-spacing:0.000px;width:20px;text-align:center">12</div>
<div class="tx" style="left:233.87px;top:475.07px;font-size:8.6px;font-family:'Liberation Sans';color:#5a5a5a;font-weight:400;letter-spacing:0.000px;width:20px;text-align:center">13</div>
<div class="tx" style="left:233.87px;top:486.12px;font-size:8.6px;font-family:'Liberation Sans';color:#217346;font-weight:400;letter-spacing:0.000px;width:20px;text-align:center">14</div>
<div class="tx" style="left:233.87px;top:497.17px;font-size:8.6px;font-family:'Liberation Sans';color:#5a5a5a;font-weight:400;letter-spacing:0.000px;width:20px;text-align:center">15</div>
<div class="tx" style="left:233.87px;top:508.22px;font-size:8.6px;font-family:'Liberation Sans';color:#5a5a5a;font-weight:400;letter-spacing:0.000px;width:20px;text-align:center">16</div>
<div class="tx" style="left:233.87px;top:519.27px;font-size:8.6px;font-family:'Liberation Sans';color:#5a5a5a;font-weight:400;letter-spacing:0.000px;width:20px;text-align:center">17</div>
<div class="tx" style="left:233.87px;top:530.32px;font-size:8.6px;font-family:'Liberation Sans';color:#5a5a5a;font-weight:400;letter-spacing:0.000px;width:20px;text-align:center">18</div>
<div class="tx" style="left:233.87px;top:541.37px;font-size:8.6px;font-family:'Liberation Sans';color:#5a5a5a;font-weight:400;letter-spacing:0.000px;width:20px;text-align:center;clip-path:inset(0 0 5.3px 0)">19</div>
<div class="tx" style="left:286.60px;top:548.23px;font-size:8px;font-family:'Liberation Sans';color:#217346;font-weight:700;letter-spacing:-0.374px;">Blad1</div>
<div class="tx" style="left:950.45px;top:562.07px;font-size:7px;font-family:'Liberation Sans';color:#666666;font-weight:400;letter-spacing:-0.935px;">100%</div>
<div class="tx" style="left:286.57px;top:580.12px;font-size:8.6px;font-family:'Liberation Sans';color:#505050;font-weight:400;letter-spacing:-0.006px;">Type here to search</div>
<div class="tx" style="left:906.65px;top:574.27px;font-size:7px;font-family:'Liberation Sans';color:#ffffff;font-weight:400;letter-spacing:-0.048px;">7:03 AM</div>
<div class="tx" style="left:902.65px;top:584.87px;font-size:7px;font-family:'Liberation Sans';color:#ffffff;font-weight:400;letter-spacing:0.280px;">9/16/2020</div>
<div class="a" id="wl"></div>
<div class="a" id="lb"></div><div class="a" style="left:0;top:0;width:1.2px;height:73px;background:#9a9a9a"></div>
</body></html>
